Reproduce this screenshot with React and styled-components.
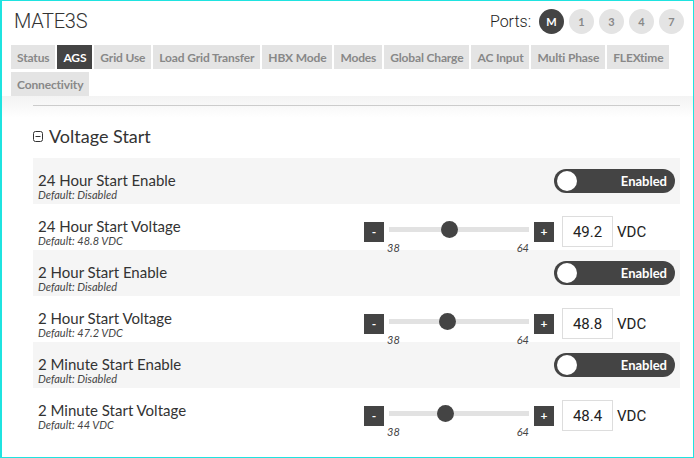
import React from 'react';
import styled, { createGlobalStyle } from 'styled-components';

const GlobalStyle = createGlobalStyle`
  html, body {
    margin: 0;
    padding: 0;
    background: #fff;
    font-family: Lato, "Noto Sans", sans-serif;
    color: #333;
  }
`;

const Frame = styled.div`
  width: 694px;
  height: 458px;
  box-sizing: border-box;
  border: 1px solid #1fe3e0;
  border-left-width: 2px;
  background: #fff;
  overflow: hidden;
  display: flex;
  flex-direction: column;
`;

const Header = styled.div`
  display: flex;
  justify-content: space-between;
  align-items: center;
  padding: 4px 9px 0 12px;
  height: 32px;
`;

const Title = styled.h1`
  margin: 0;
  font-family: Roboto, sans-serif;
  font-weight: 300;
  font-size: 20px;
  letter-spacing: -0.3px;
  color: #333;
`;

const Ports = styled.div`
  display: flex;
  align-items: center;
  gap: 5px;
`;

const PortsLabel = styled.span`
  font-family: Roboto, sans-serif;
  font-weight: 300;
  font-size: 16px;
  margin-right: 3px;
  color: #222;
`;

const PortDot = styled.span`
  width: 25px;
  height: 25px;
  border-radius: 50%;
  display: flex;
  align-items: center;
  justify-content: center;
  font-size: 11px;
  font-weight: 700;
  background: ${p => (p.$active ? '#444' : '#e4e4e4')};
  color: ${p => (p.$active ? '#fff' : '#888')};
`;

const Tabs = styled.div`
  display: flex;
  flex-wrap: wrap;
  gap: 3px 2px;
  padding: 8px 9px 0;
`;

const Tab = styled.div`
  height: 24px;
  padding: 0 6px;
  display: flex;
  align-items: center;
  font-size: 12px;
  font-weight: 700;
  letter-spacing: -0.15px;
  background: ${p => (p.$active ? '#444' : '#e4e4e4')};
  color: ${p => (p.$active ? '#fff' : '#888')};
`;

const Content = styled.div`
  flex: 1;
  padding: 9px 13px 0 31px;
  background: linear-gradient(#f3f3f3, #fff 22px);
`;

const Rule = styled.hr`
  margin: 0;
  border: 0;
  border-top: 1px solid #ccc;
`;

const SectionHead = styled.div`
  display: flex;
  align-items: center;
  gap: 6px;
  padding: 19px 0 11px;
  font-size: 18px;
  color: #333;
`;

const Row = styled.div`
  height: 46px;
  display: flex;
  align-items: center;
  justify-content: space-between;
  padding: 0 5px;
  background: ${p => (p.$shaded ? '#f5f5f5' : '#fff')};
`;

const LabelBlock = styled.div`
  display: flex;
  flex-direction: column;
  padding-top: 8px;
`;

const Label = styled.span`
  font-size: 15px;
  line-height: 18px;
  color: #333;
`;

const Default = styled.span`
  font-size: 11px;
  font-style: italic;
  color: #444;
  line-height: 11px;
`;

const Control = styled.div`
  width: 311px;
  display: flex;
  align-items: center;
  justify-content: ${p => (p.$end ? 'flex-end' : 'flex-start')};
  padding-top: ${p => (p.$end ? '0' : '9px')};
`;

const Toggle = styled.div`
  width: 121px;
  height: 24px;
  border-radius: 12px;
  background: #444;
  display: flex;
  align-items: center;
  justify-content: space-between;
  padding: 0 8px 0 3px;
  box-sizing: border-box;
`;

const Knob = styled.span`
  width: 20px;
  height: 20px;
  border-radius: 50%;
  background: #fff;
`;

const ToggleText = styled.span`
  color: #fff;
  font-size: 13px;
  font-weight: 700;
`;

const StepButton = styled.div`
  width: 20px;
  height: 20px;
  background: #444;
  color: #fff;
  font-size: 12px;
  font-weight: 700;
  display: flex;
  align-items: center;
  justify-content: center;
`;

const Slider = styled.div`
  position: relative;
  width: 140px;
  height: 20px;
  margin: 0 5px 0 5px;
`;

const Track = styled.div`
  position: absolute;
  left: 0;
  right: 0;
  top: 5px;
  height: 5px;
  background: #e2e2e2;
`;

const Thumb = styled.span`
  position: absolute;
  top: -1px;
  width: 17px;
  height: 17px;
  margin-left: -8px;
  border-radius: 50%;
  background: #444;
`;

const Bound = styled.span`
  position: absolute;
  top: 19px;
  font-size: 11px;
  font-style: italic;
  color: #444;
  ${p => (p.$right ? 'right: 0;' : 'left: -2px;')}
`;

const ValueBox = styled.div`
  width: 51px;
  height: 31px;
  margin-left: 8px;
  border: 1px solid #ddd;
  box-sizing: border-box;
  display: flex;
  align-items: center;
  justify-content: center;
  font-family: Roboto, sans-serif;
  font-size: 15px;
  color: #222;
`;

const Unit = styled.span`
  margin-left: 4px;
  font-family: Roboto, sans-serif;
  font-size: 15px;
  color: #222;
`;

const CollapseIcon = () => (
  <svg width="10" height="11" viewBox="0 0 10 11">
    <rect x="0.5" y="0.5" width="9" height="10" rx="2" fill="none" stroke="#333" />
    <line x1="2.5" y1="5.5" x2="7.5" y2="5.5" stroke="#333" />
  </svg>
);

const ports = ['M', '1', '3', '4', '7'];
const tabs = [
  'Status', 'AGS', 'Grid Use', 'Load Grid Transfer', 'HBX Mode', 'Modes',
  'Global Charge', 'AC Input', 'Multi Phase', 'FLEXtime', 'Connectivity',
];

const settings = [
  { label: '24 Hour Start Enable', def: 'Default: Disabled', type: 'toggle' },
  { label: '24 Hour Start Voltage', def: 'Default: 48.8 VDC', type: 'range', value: 49.2 },
  { label: '2 Hour Start Enable', def: 'Default: Disabled', type: 'toggle' },
  { label: '2 Hour Start Voltage', def: 'Default: 47.2 VDC', type: 'range', value: 48.8 },
  { label: '2 Minute Start Enable', def: 'Default: Disabled', type: 'toggle' },
  { label: '2 Minute Start Voltage', def: 'Default: 44 VDC', type: 'range', value: 48.4 },
];

const MIN = 38;
const MAX = 64;

const RangeControl = ({ value }) => (
  <Control>
    <StepButton>-</StepButton>
    <Slider>
      <Track />
      <Thumb style={{ left: `${((value - MIN) / (MAX - MIN)) * 100}%` }} />
      <Bound>{MIN}</Bound>
      <Bound $right>{MAX}</Bound>
    </Slider>
    <StepButton>+</StepButton>
    <ValueBox>{value.toFixed(1)}</ValueBox>
    <Unit>VDC</Unit>
  </Control>
);

const App = () => (
  <>
    <GlobalStyle />
    <Frame>
      <Header>
        <Title>MATE3S</Title>
        <Ports>
          <PortsLabel>Ports:</PortsLabel>
          {ports.map(p => (
            <PortDot key={p} $active={p === 'M'}>{p}</PortDot>
          ))}
        </Ports>
      </Header>
      <Tabs>
        {tabs.map(t => (
          <Tab key={t} $active={t === 'AGS'}>{t}</Tab>
        ))}
      </Tabs>
      <Content>
        <Rule />
        <SectionHead>
          <CollapseIcon />
          Voltage Start
        </SectionHead>
        {settings.map((s, i) => (
          <Row key={s.label} $shaded={i % 2 === 0}>
            <LabelBlock>
              <Label>{s.label}</Label>
              <Default>{s.def}</Default>
            </LabelBlock>
            {s.type === 'toggle' ? (
              <Control $end>
                <Toggle>
                  <Knob />
                  <ToggleText>Enabled</ToggleText>
                </Toggle>
              </Control>
            ) : (
              <RangeControl value={s.value} />
            )}
          </Row>
        ))}
      </Content>
    </Frame>
  </>
);

export default App;
